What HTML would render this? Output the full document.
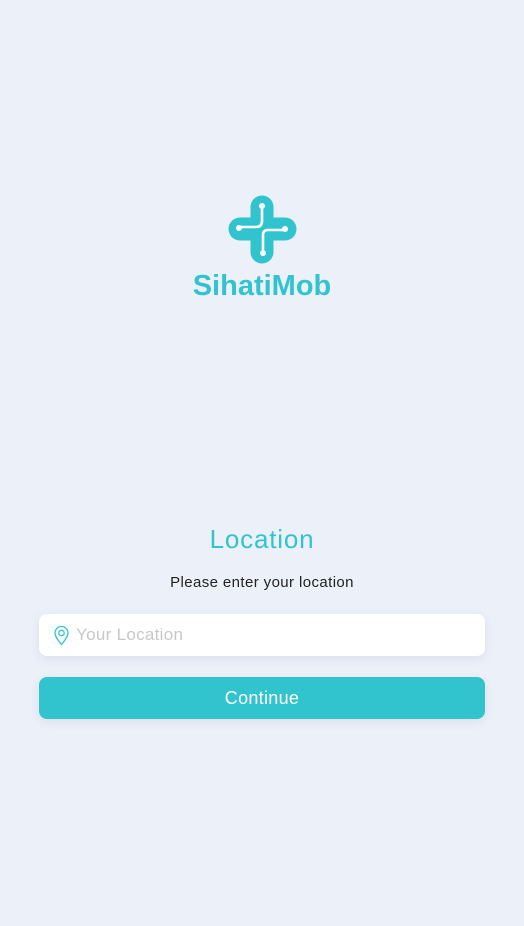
<!DOCTYPE html><html><head><meta charset="utf-8"><style>
body{margin:0;width:524px;height:926px;background:#ecf0f9;font-family:"Liberation Sans",sans-serif;position:relative;overflow:hidden}
.a{position:absolute}
</style></head><body>
<svg class="a" style="left:226px;top:192px" width="74" height="76" viewBox="226 192 74 76">
<g stroke="#31c4cf" stroke-width="23" stroke-linecap="round"><path d="M262 207v45"/><path d="M240 229h45"/></g>
<g stroke="#fff" stroke-width="2.6" fill="none" stroke-linecap="round">
<path d="M262 207v14q0 6-6 6h-16"/><path d="M285 230h-17q-5 0-5 5v17"/></g>
<g fill="#fff"><circle cx="262" cy="206" r="3"/><circle cx="239" cy="228" r="3"/><circle cx="285" cy="229" r="3"/><circle cx="263" cy="253" r="3"/></g>
</svg>
<div class="a" style="left:0;width:524px;top:270px;text-align:center;font-size:29px;font-weight:bold;color:#31c4cf">SihatiMob</div>
<div class="a" style="left:0;width:524px;top:524px;text-align:center;font-size:26px;letter-spacing:0.8px;color:#31c4cf">Location</div>
<div class="a" style="left:0;width:524px;top:574px;text-align:center;font-size:15px;letter-spacing:0.4px;color:#222">Please enter your location</div>
<div class="a" style="left:39px;top:614px;width:446px;height:42px;background:#fff;border-radius:8px;box-shadow:0 3px 10px rgba(150,160,190,.2)">
<svg class="a" style="left:14px;top:11px" width="17" height="21" viewBox="0 0 17 21"><path d="M8.5 19.5C4 14 2 11 2 8a6.5 6.5 0 0 1 13 0c0 3-2 6-6.5 11.5z" fill="none" stroke="#31c4cf" stroke-width="1.3"/><circle cx="8.5" cy="8" r="2.7" fill="none" stroke="#31c4cf" stroke-width="1.3"/></svg>
<div class="a" style="left:37px;top:11px;font-size:17px;letter-spacing:0.3px;color:#c8c8c8">Your Location</div></div>
<div class="a" style="left:39px;top:677px;width:446px;height:42px;background:#31c4cf;border-radius:8px;color:#fff;font-size:18px;letter-spacing:0.3px;line-height:42px;text-align:center;box-shadow:0 3px 10px rgba(150,160,190,.2)">Continue</div>
</body></html>
